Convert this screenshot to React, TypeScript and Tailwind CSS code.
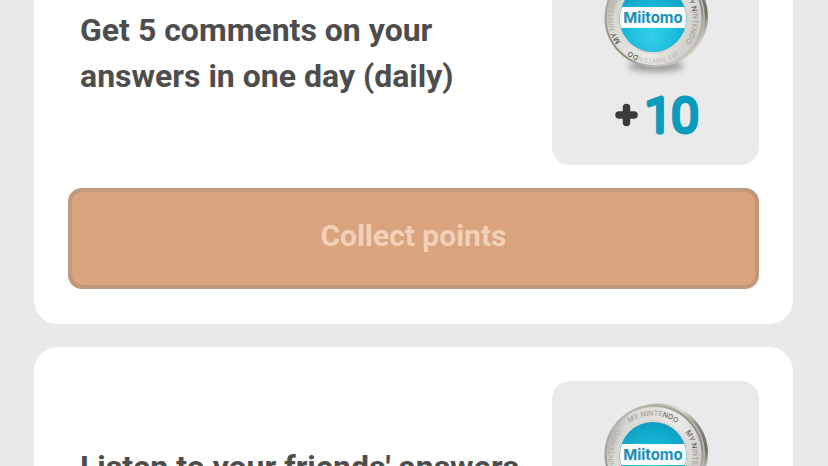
interface RingLabelProps {
  angle: number;
  parts: { text: string; color: string }[];
}

const RING_LABELS: RingLabelProps[] = [
  {
    angle: 0,
    parts: [
      { text: "MY NINTE", color: "#a3a29d" },
      { text: "NDO", color: "#6f6e6a" },
    ],
  },
  {
    angle: 90,
    parts: [
      { text: "MY N", color: "#5f5d59" },
      { text: "INTENDO", color: "#a5a29c" },
    ],
  },
  {
    angle: 180,
    parts: [
      { text: "MY NINTEN", color: "#c4c2bd" },
      { text: "DO", color: "#55534e" },
    ],
  },
  {
    angle: 270,
    parts: [
      { text: "MY", color: "#4d4b47" },
      { text: " NINTENDO", color: "#b5b3ad" },
    ],
  },
];

const Coin: React.FC<{ id: string }> = ({ id }) => (
  <svg
    width="120"
    height="120"
    viewBox="0 0 120 120"
    role="img"
    aria-label="Miitomo"
  >
    <defs>
      <linearGradient id={`${id}-edge`} x1="0" y1="0" x2="1" y2="1">
        <stop offset="0" stopColor="#d9d8d3" />
        <stop offset="0.25" stopColor="#b5b3ab" />
        <stop offset="0.4" stopColor="#e3e2dd" />
        <stop offset="0.55" stopColor="#8f8d84" />
        <stop offset="0.72" stopColor="#6d6b62" />
        <stop offset="0.84" stopColor="#d9d7cf" />
        <stop offset="1" stopColor="#8d8b81" />
      </linearGradient>
      <linearGradient id={`${id}-face`} x1="0" y1="0.3" x2="1" y2="0.7">
        <stop offset="0" stopColor="#a9a7a0" />
        <stop offset="0.15" stopColor="#d9d8d2" />
        <stop offset="0.6" stopColor="#ecebe7" />
        <stop offset="1" stopColor="#c9c7c1" />
      </linearGradient>
      <linearGradient id={`${id}-rim`} x1="0" y1="0" x2="0.6" y2="1">
        <stop offset="0" stopColor="#c2c1bb" />
        <stop offset="0.45" stopColor="#99978f" />
        <stop offset="0.75" stopColor="#8f8d82" />
        <stop offset="1" stopColor="#c7c5bc" />
      </linearGradient>
      <radialGradient id={`${id}-blue`} cx="0.48" cy="0.75" r="0.7">
        <stop offset="0" stopColor="#35d0e8" />
        <stop offset="0.5" stopColor="#1bbcdc" />
        <stop offset="1" stopColor="#0c9fc4" />
      </radialGradient>
      <filter id={`${id}-blur`} x="-20%" y="-100%" width="140%" height="300%">
        <feGaussianBlur stdDeviation="3" />
      </filter>
      <clipPath id={`${id}-clip`}>
        <circle cx="57" cy="60.5" r="33.5" />
      </clipPath>
      <path id={`${id}-arc`} d="M17 60.5 A40 40 0 0 1 97 60.5" />
    </defs>

    <ellipse
      cx="60"
      cy="108"
      rx="28"
      ry="6"
      fill="#77756f"
      opacity="0.65"
      filter={`url(#${id}-blur)`}
    />
    <circle cx="62" cy="58.5" r="50" fill={`url(#${id}-edge)`} />
    <circle cx="59.5" cy="59" r="49.5" fill="#bab8af" />
    <circle
      cx="58"
      cy="59.5"
      r="48.5"
      fill={`url(#${id}-face)`}
      stroke={`url(#${id}-rim)`}
      strokeWidth="2"
    />

    {RING_LABELS.map((label) => (
      <text
        key={label.angle}
        transform={`rotate(${label.angle} 57 60.5)`}
        textAnchor="middle"
        className="font-['Inter',sans-serif] text-[7px] font-medium"
      >
        <textPath href={`#${id}-arc`} startOffset="50%">
          {label.parts.map((part) => (
            <tspan key={part.text} fill={part.color}>
              {part.text}
            </tspan>
          ))}
        </textPath>
      </text>
    ))}

    <circle cx="57" cy="60.5" r="35" fill="#f1f1ee" stroke="#d3d2cd" />
    <g clipPath={`url(#${id}-clip)`}>
      <rect x="22" y="25" width="70" height="70" fill={`url(#${id}-blue)`} />
      <rect x="22" y="49" width="70" height="21" fill="#f8fcfd" />
    </g>
    <circle
      cx="57"
      cy="60.5"
      r="33.5"
      fill="none"
      stroke="#5f97a3"
      strokeWidth="1"
      opacity="0.5"
    />
    <text
      x="57"
      y="65"
      textAnchor="middle"
      fill="#1a8fb5"
      className="font-['Inter',sans-serif] text-[15px] font-bold"
    >
      Miitomo
    </text>
  </svg>
);

const Points: React.FC<{ value: number }> = ({ value }) => (
  <svg width="92" height="52" viewBox="0 0 92 52">
    <path
      d="M9 25H24M16.5 17.5V32.5"
      stroke="#3a3a3a"
      strokeWidth="7.5"
      strokeLinecap="round"
    />
    <text
      x="35"
      y="42"
      fill="#0a9bbd"
      stroke="#0a9bbd"
      strokeWidth="5"
      strokeLinejoin="round"
      className="font-['Roboto',sans-serif] text-[48px] font-light"
    >
      {value}
    </text>
  </svg>
);

interface MissionCardProps {
  id: string;
  title: string;
  points: number;
}

const MissionCard: React.FC<MissionCardProps> = ({ id, title, points }) => (
  <article className="rounded-3xl bg-white px-[34px] pt-[34px] pb-[35px]">
    <div className="flex items-center justify-between gap-3">
      <h2 className="min-h-24 flex-1 pb-1 pl-3 text-[32px] leading-[46px] font-bold text-[#4d4d4d]">
        {title}
      </h2>
      <div className="flex w-[207px] shrink-0 flex-col items-center gap-3 rounded-[18px] bg-[#eaeaea] pt-3.5 pb-[23px]">
        <Coin id={id} />
        <Points value={points} />
      </div>
    </div>
    <button
      type="button"
      disabled
      className="mt-[23px] h-[101px] w-full rounded-[14px] border-4 border-[#c1997a] bg-[#d9a47e] pb-1.5 text-[30px] font-bold text-[#f3d1b9]"
    >
      Collect points
    </button>
  </article>
);

const App: React.FC = () => {
  return (
    <main className="h-screen overflow-hidden bg-[#e9e9e9] font-['Roboto',sans-serif]">
      {/* the list is scrolled part way into the first mission */}
      <div className="-mt-[90px] flex flex-col gap-[23px] pr-[35px] pl-[34px]">
        <MissionCard
          id="comments"
          title="Get 5 comments on your answers in one day (daily)"
          points={10}
        />
        <MissionCard
          id="listen"
          title="Listen to your friends' answers"
          points={10}
        />
      </div>
    </main>
  );
};

export default App;
